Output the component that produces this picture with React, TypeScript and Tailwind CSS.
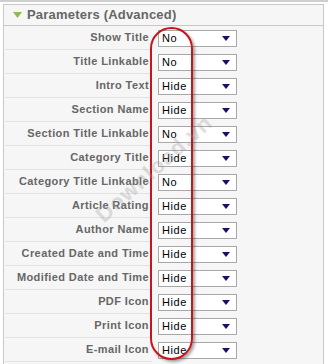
import React from 'react'

const rows: [string, string][] = [
  ['Show Title', 'No'],
  ['Title Linkable', 'No'],
  ['Intro Text', 'Hide'],
  ['Section Name', 'Hide'],
  ['Section Title Linkable', 'No'],
  ['Category Title', 'Hide'],
  ['Category Title Linkable', 'No'],
  ['Article Rating', 'Hide'],
  ['Author Name', 'Hide'],
  ['Created Date and Time', 'Hide'],
  ['Modified Date and Time', 'Hide'],
  ['PDF Icon', 'Hide'],
  ['Print Icon', 'Hide'],
  ['E-mail Icon', 'Hide'],
  ['', ''],
]

function Select({ value }: { value: string }) {
  return (
    <div className="flex items-center justify-between w-[79px] h-[17px] bg-white border border-[#a8a8a8] pl-[3px] pr-[6px]">
      <span className="text-[11px] text-black tracking-[0.6px] leading-none">{value}</span>
      <svg width="8" height="5" viewBox="0 0 8 5">
        <path d="M0 0h8L4 5z" fill="#141466" />
      </svg>
    </div>
  )
}

export default function App() {
  return (
    <div className="relative w-[328px] h-[364px] overflow-hidden bg-white font-['Liberation_Sans',Arial,sans-serif]">
      <div className="h-[2px] bg-[#cfcfcf]" />
      <div className="mt-[2px] ml-[3px] w-[321px] border border-[#c8c8c8] bg-[#f6f6f6]">
        <div className="flex items-center h-[21px] border-b border-[#c8c8c8] pl-[9px] gap-[5px]">
          <svg width="9" height="6" viewBox="0 0 9 6">
            <path d="M0 0h9L4.5 6z" fill="#8cbc52" />
          </svg>
          <span className="text-[13px] font-bold text-[#666] tracking-[0.2px]">Parameters (Advanced)</span>
        </div>
        <div className="flex flex-col">
          {rows.map(([label, value], i) => (
            <div key={i} className="flex h-[24px]">
              <div className="w-[147px] ml-[1px] flex items-center justify-end pr-[3px] border-b border-[#e2e2e2]">
                <span className="text-[11px] font-bold text-[#666] tracking-[0.4px] whitespace-nowrap">{label}</span>
              </div>
              <div className="flex items-center pl-[6px]">{value && <Select value={value} />}</div>
            </div>
          ))}
        </div>
      </div>

      <div className="absolute left-[150px] top-[27px] w-[43px] h-[333px] rounded-[22px] border-2 border-[#c4161c] shadow-[2px_2px_3px_rgba(0,0,0,0.35)] pointer-events-none" />

      <div className="absolute left-[80px] top-[152px] -rotate-[42deg] text-[22px] font-bold text-[#999] opacity-30 tracking-[1px] pointer-events-none">
        Download.vn
      </div>
    </div>
  )
}
